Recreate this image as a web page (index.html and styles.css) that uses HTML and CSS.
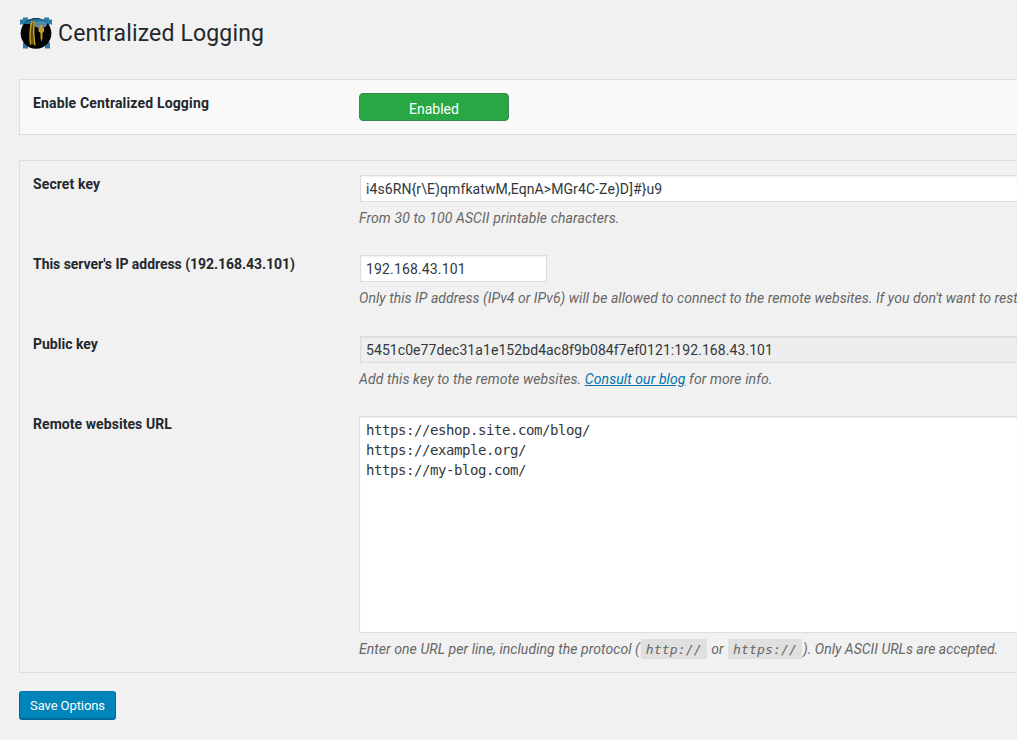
FILE: index.html
```html
<!DOCTYPE html>
<html lang="en">
<head>
<meta charset="utf-8">
<title>Centralized Logging</title>
<link rel="stylesheet" href="styles.css">
</head>
<body>
<main class="page">
  <h1 class="title">
    <svg class="logo" viewBox="0 0 32 32" aria-hidden="true">
      <defs>
        <linearGradient id="shine" x1="0" y1="0" x2="0" y2="1">
          <stop offset="0" stop-color="#257fae"/>
          <stop offset="1" stop-color="#a9bfcb"/>
        </linearGradient>
      </defs>
      <path fill="#2b7ba5" d="M3 .5h5v2h16v-2h5v2h3v5h-3v18h1v6h-5v-3H8v3H3v-6h1v-18H0v-5h3z"/>
      <circle cx="16" cy="16.300" r="15.400" fill="#020202"/>
      <path fill="#246f96" d="M7 4Q16-1 26 4L28 7H4Q5 5 7 4z"/>
      <ellipse cx="20.500" cy="7.300" rx="6.500" ry="3.800" fill="url(#shine)" opacity=".8"/>
      <path fill="none" stroke="#5c4c10" stroke-width="4" d="M12.800 5Q11 15 12.500 27.500"/>
      <path fill="none" stroke="#c9a324" stroke-width="1.400" d="M12 4Q9 14 10.500 27.500M14 4q-1 12 .8 24.500"/>
      <path fill="#c49d27" d="M20.300 8h2v3H24v3.500l-1.500 1.500v5l-1 4-1-4v-5l-2-1.500V11h1.800z"/>
    </svg>
    <span class="title-text">Centralized Logging</span>
  </h1>

  <section class="panel panel-light">
    <div class="row row-toggle">
      <div class="label label-toggle">Enable Centralized Logging</div>
      <div class="field"><button class="toggle" type="button">Enabled</button></div>
    </div>
  </section>

  <section class="panel panel-settings">
    <div class="row">
      <label class="label label-secret" for="secret">Secret key</label>
      <div class="field">
        <input class="input input-secret" id="secret" type="text" value="i4s6RN{r\E)qmfkatwM,EqnA&gt;MGr4C-Ze)D]#}u9">
        <p class="description description-secret">From 30 to 100 ASCII printable characters.</p>
      </div>
    </div>
    <div class="row">
      <label class="label label-ip" for="ip">This server's IP address (192.168.43.101)</label>
      <div class="field">
        <input class="input input-short" id="ip" type="text" value="192.168.43.101">
        <p class="description description-ip">Only this IP address (IPv4 or IPv6) will be allowed to connect to the remote websites. If you don't want to rest</p>
      </div>
    </div>
    <div class="row">
      <label class="label" for="public">Public key</label>
      <div class="field field-low">
        <input class="input input-public" id="public" type="text" readonly value="5451c0e77dec31a1e152bd4ac8f9b084f7ef0121:192.168.43.101">
        <p class="description description-public">Add this key to the remote websites. <a class="link" href="#">Consult our blog</a> for more info.</p>
      </div>
    </div>
    <div class="row row-sites">
      <label class="label label-sites" for="sites">Remote websites URL</label>
      <div class="field field-low">
        <textarea class="textarea" id="sites" spellcheck="false">https://eshop.site.com/blog/
https://example.org/
https://my-blog.com/</textarea>
        <p class="description"><span class="sites-hint">Enter one URL per line, including the protocol (</span><code class="code">http://</code> or <code class="code">https://</code>). Only ASCII URLs are accepted.</p>
      </div>
    </div>
  </section>

  <button class="save" type="submit">Save Options</button>
</main>
</body>
</html>
```
FILE: styles.css
```css
* { box-sizing: border-box; }

body {
  margin: 0;
  overflow: hidden;
  background: #f1f1f1;
  color: #23282d;
  font: 14px/20px Roboto, sans-serif;
}

.page {
  height: 740px;
  padding: 17px 0 0 19px;
}

.title {
  display: flex;
  align-items: center;
  gap: 6px;
  height: 32px;
  margin: 0 0 30px;
  padding-left: 1px;
  font-size: 23px;
  font-weight: 400;
  letter-spacing: .16px;
  line-height: 32px;
}
.title-text { padding-top: 2px; }

.logo { width: 32px; height: 32px; flex: none; }

.panel {
  border: 1px solid #ddd;
  border-right: 0;
}
.panel-light { margin-bottom: 25px; background: #f9f9f9; }
.panel-settings { height: 513px; margin-bottom: 18px; }

.row {
  display: grid;
  grid-template-columns: 326px minmax(0, 1fr);
  height: 80px;
  padding-left: 13px;
}
.row-toggle { height: 54px; }
.row-sites { height: 271px; }

.label { padding-top: 13px; font-weight: 700; }
.label-toggle { letter-spacing: .16px; }
.label-secret { letter-spacing: .1px; }
.label-ip { letter-spacing: -.045px; }
.label-sites { letter-spacing: .06px; }

.field { padding-top: 14px; }
.field-low { padding-top: 15px; }
.row-toggle .field { padding-top: 13px; }

.toggle {
  display: block;
  width: 150px;
  height: 28px;
  padding: 3px 0 0;
  border: 1px solid #3c8650;
  border-radius: 4px;
  background: #28a745;
  color: #fff;
  font: 14px/20px Roboto, sans-serif;
}

.input {
  display: block;
  width: calc(100% - 1px);
  height: 27px;
  margin-left: 1px;
  padding: 2px 5px;
  border: 1px solid #ddd;
  border-right: 0;
  border-radius: 0;
  background: #fff;
  box-shadow: inset 0 1px 2px rgba(0, 0, 0, .07);
  color: #32373c;
  font: 14px/20px Roboto, sans-serif;
}
.input-secret { letter-spacing: .09px; }
.input-short {
  width: 187px;
  border-right: 1px solid #ddd;
  letter-spacing: .15px;
}
.input-public { letter-spacing: .075px; }
.input[readonly] { background: #eee; }

.textarea {
  display: block;
  width: 100%;
  height: 217px;
  padding: 3px 6px;
  border: 1px solid #ddd;
  border-right: 0;
  border-radius: 0;
  background: #fff;
  box-shadow: inset 0 1px 2px rgba(0, 0, 0, .07);
  color: #32373c;
  font: 14px/20px "DejaVu Sans Mono", monospace;
  letter-spacing: -.428px;
  resize: none;
}

.description {
  margin: 6px 0 0;
  overflow: hidden;
  color: #666;
  font-style: italic;
  white-space: nowrap;
}
.description-secret { letter-spacing: .105px; }
.description-ip { letter-spacing: .04px; }
.description-public { letter-spacing: .09px; }
.sites-hint { letter-spacing: .06px; }

.link { color: #0073aa; }

.code {
  display: inline-block;
  height: 20px;
  margin: 0 1px;
  padding: 0 5px;
  background: #e0e0e0;
  font: italic 13px/21px "DejaVu Sans Mono", monospace;
  letter-spacing: .174px;
  vertical-align: top;
}

.save {
  display: block;
  width: 97px;
  height: 29px;
  padding: 1px 0 0;
  border: 1px solid;
  border-color: #0073aa #006799 #006799;
  border-bottom-width: 2px;
  border-radius: 3px;
  background: #0085ba;
  color: #fff;
  font: 13px/25px Roboto, sans-serif;
  letter-spacing: -.1px;
}
```
